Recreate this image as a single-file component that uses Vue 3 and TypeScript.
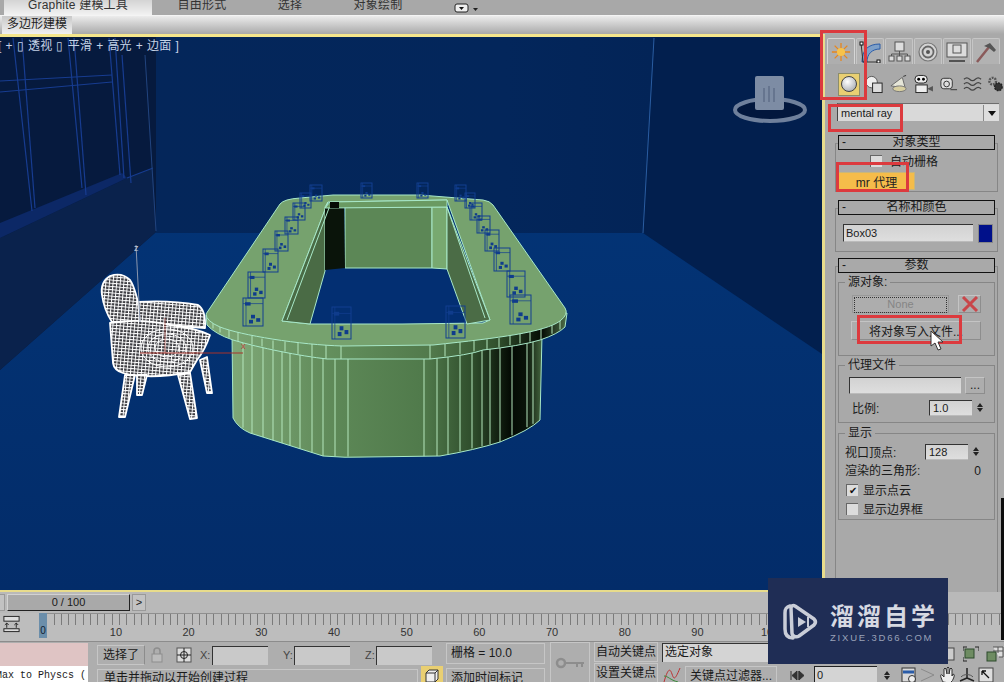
<script setup lang="ts">
type Pt = [number, number];

const rimTop: Pt[] = [[206, 317], [220, 327], [267, 340], [343, 346], [433, 345], [500, 338], [553, 325], [567, 313]];
const rimBottom: Pt[] = [[207, 325], [233, 340], [287, 352], [327, 359], [430, 359], [483, 350], [540, 340], [565, 327]];
const bodyBottom: Pt[] = [[233, 420], [250, 433], [323, 456], [367, 457], [440, 456], [500, 442], [540, 420]];

function yAt(line: Pt[], x: number): number {
  for (let i = 0; i < line.length - 1; i++) {
    const [x0, y0] = line[i];
    const [x1, y1] = line[i + 1];
    if (x >= x0 && x <= x1) return y0 + ((y1 - y0) * (x - x0)) / (x1 - x0);
  }
  return line[line.length - 1][1];
}

const rimRibs = [213, 220, 229, 238, 252, 262, 273, 285, 298, 312, 326, 341, 430, 445, 460, 474, 487, 499, 510, 520, 530, 541, 552, 560]
  .map((x) => ({ x, y1: yAt(rimTop, x), y2: yAt(rimBottom, x) }));
const bodyRibs = [243, 252, 263, 273, 282, 290, 300, 312, 323, 335, 348, 424, 437, 448, 460, 472, 482, 490, 500, 512, 527, 533]
  .map((x) => ({ x, y1: yAt(rimBottom, x), y2: yAt(bodyBottom, x) }));

// 椅子 (x, y, w, h)
const stools = [
  [243, 298, 20, 28], [248, 272, 17, 26], [263, 249, 15, 23], [275, 231, 13, 20], [285, 217, 13, 17],
  [293, 203, 12, 17], [300, 193, 11, 15], [310, 185, 12, 16],
  [510, 295, 21, 29], [507, 271, 18, 26], [494, 248, 16, 23], [485, 230, 14, 21], [477, 216, 13, 17],
  [470, 203, 12, 17], [465, 193, 10, 15], [455, 185, 11, 16],
  [361, 183, 11, 15], [417, 183, 11, 15], [332, 307, 19, 32], [446, 306, 19, 32],
];

const chairParts = [
  'M102 295Q100 282 110 276Q122 272 130 280Q136 288 142 322L112 322Q104 310 102 295z',
  'M138 302Q170 300 198 305Q206 310 205 328L140 323z',
  'M110 323Q140 318 170 325Q195 328 210 335Q205 350 197 360L190 372Q150 380 123 373Q114 370 113 363z',
  'M125 375L135 375L125 417L119 417z',
  'M137 375L147 375L142 395L137 395z',
  'M178 375L190 373L197 418L190 419z',
  'M200 360L207 357L212 393L207 393z',
];

const windowLines = [
  [13, 38, 32, 211], [22, 38, 35, 208], [68, 38, 82, 188], [74, 38, 86, 195],
  [109, 38, 120, 175], [115, 38, 124, 178], [122, 55, 131, 183],
  [0, 81, 112, 75], [0, 92, 112, 82], [127, 178, 153, 168],
];

const rulerLabels = [10, 20, 30, 40, 50, 60, 70, 80, 90, 100];
</script>

<template>
  <div class="app">
    <div class="tabs">
      <span class="tab active">Graphite 建模工具</span>
      <span class="tab w1">自由形式</span>
      <span class="tab w2">选择</span>
      <span class="tab w3">对象绘制</span>
      <svg class="tab-menu" width="26" height="10" viewBox="0 0 26 10">
        <rect x="1" y="1" width="13" height="8" rx="2" fill="#eee" stroke="#222" />
        <path d="M5 4h5l-2.5 3z" fill="#111" />
        <path d="M19 5h5l-2.5 3z" fill="#222" />
      </svg>
    </div>
    <div class="ribbon"><span class="ribbon-tab">多边形建模</span></div>

    <div class="middle">
      <div class="viewport">
        <svg class="scene" width="822" height="553" viewBox="0 37 822 553">
          <defs>
            <linearGradient id="rimShade" x1="206" x2="567" y1="0" y2="0" gradientUnits="userSpaceOnUse">
              <stop offset="0" stop-color="#7fa877" />
              <stop offset="0.4" stop-color="#5f8b59" />
              <stop offset="0.62" stop-color="#527a4c" />
              <stop offset="0.8" stop-color="#33532f" />
              <stop offset="0.93" stop-color="#050c05" />
              <stop offset="1" stop-color="#4f7049" />
            </linearGradient>
            <linearGradient id="bodyShade" x1="232" x2="542" y1="0" y2="0" gradientUnits="userSpaceOnUse">
              <stop offset="0" stop-color="#7fa877" />
              <stop offset="0.35" stop-color="#5c8756" />
              <stop offset="0.62" stop-color="#507a4b" />
              <stop offset="0.78" stop-color="#2e4c2b" />
              <stop offset="0.9" stop-color="#040a04" />
              <stop offset="0.95" stop-color="#0a140a" />
              <stop offset="1" stop-color="#45663f" />
            </linearGradient>
            <linearGradient id="wallShade" x1="0" x2="1" y1="0" y2="0">
              <stop offset="0" stop-color="#04265a" />
              <stop offset="0.7" stop-color="#03265b" />
              <stop offset="1" stop-color="#032457" />
            </linearGradient>
            <linearGradient id="floorShade" x1="0" x2="0" y1="0" y2="1">
              <stop offset="0" stop-color="#03377b" />
              <stop offset="1" stop-color="#032c69" />
            </linearGradient>
            <pattern id="mesh" width="3.6" height="3.2" patternUnits="userSpaceOnUse" patternTransform="rotate(5)">
              <rect width="3.6" height="3.2" fill="#3b3b40" />
              <path d="M0 .5H3.600M.5 0V3.200" stroke="#fff" stroke-width="1" />
            </pattern>
          </defs>

          <!-- 房间 -->
          <rect x="0" y="37" width="822" height="553" fill="url(#floorShade)" />
          <polygon points="156,37 654,37 643,233 156,233" fill="url(#wallShade)" />
          <polygon points="654,37 822,37 822,354 643,233" fill="#021f4e" />
          <polygon points="0,37 156,37 156,232 0,370" fill="#061a3e" />
          <polygon points="0,238 127,178 153,168 156,232 0,370" fill="#0a224c" />
          <polygon points="0,223 122,173 127,178 0,238" fill="#0c2866" />
          <line v-for="(l, i) in windowLines" :key="i" :x1="l[0]" :y1="l[1]" :x2="l[2]" :y2="l[3]" stroke="#173c90" stroke-width="1.2" />
          <line x1="145" y1="55" x2="156" y2="231" stroke="#21447f" />
          <line x1="654" y1="38" x2="643" y2="233" stroke="#2a5ca0" />

          <!-- 桌子 -->
          <path d="M232 335L233 418Q238 428 250 433L323 456Q345 458 367 457L440 456Q475 450 500 442Q530 430 540 420L542 335z" fill="url(#bodyShade)" stroke="#a8e8c8" />
          <line v-for="r in bodyRibs" :key="'b' + r.x" :x1="r.x" :y1="r.y1" :x2="r.x" :y2="r.y2" stroke="#b4e6bc" stroke-width="1" />
          <path d="M206 315L207 325Q215 334 233 340C260 348 300 356 327 359L430 359Q470 355 483 350Q520 346 540 340Q558 334 565 327L567 313z" fill="url(#rimShade)" stroke="#a8e8c8" />
          <line v-for="r in rimRibs" :key="'r' + r.x" :x1="r.x" :y1="r.y1" :x2="r.x" :y2="r.y2" stroke="#b4e6bc" stroke-width="1" />
          <path d="M206 314L280 204Q284 199 300 198L333 195L420 195L483 200Q490 201 493 205L565 308Q569 314 560 321C545 332 500 338 433 345L343 346C300 345 240 335 220 327Q206 321 206 314z" fill="#76a26e" stroke="#a8e8c8" />
          <polygon points="328,202 447,200 490,320 483,323 402,324 310,324 282,321" fill="#032f72" stroke="#a8e8c8" />
          <polygon points="328,202 282,321 310,324 325,271 325,207" fill="#4a6b45" stroke="#a8e8c8" />
          <polygon points="345,207 432,207 432,268 345,268" fill="#5c8756" stroke="#a8e8c8" />
          <polygon points="325,208 344,207 345,268 325,270" fill="#0a140a" />
          <polygon points="432,207 447,207 447,269 432,268" fill="#78a970" stroke="#a8e8c8" />
          <polygon points="447,207 490,320 467,324 447,269" fill="#4b6c46" stroke="#a8e8c8" />
          <polygon points="330,202 447,200 447,207 325,208" fill="#6a9a62" stroke="#a8e8c8" />
          <rect x="330" y="202" width="9" height="6" fill="#050a05" />
          <path d="M287 320L329 208M485 318L447 207" fill="none" stroke="#a8e8c8" />

          <!-- 代理物体 -->
          <g v-for="(s, i) in stools" :key="'s' + i" fill="none" stroke="#123f90">
            <rect :x="s[0]" :y="s[1]" :width="s[2]" :height="s[3]" />
            <path :d="`M${s[0]} ${s[1] + s[3] * 0.2}h${s[2]}M${s[0] + s[2] * 0.15} ${s[1]}v${s[3]}`" stroke-width="0.7" />
            <rect :x="s[0] + s[2] * 0.1" :y="s[1] + s[3] * 0.15" :width="s[2] * 0.28" :height="s[3] * 0.12" fill="#0f3c8c" stroke="none" />
            <rect :x="s[0] + s[2] * 0.4" :y="s[1] + s[3] * 0.6" :width="s[2] * 0.2" :height="s[3] * 0.13" fill="#0f3c8c" stroke="none" />
            <rect :x="s[0] + s[2] * 0.66" :y="s[1] + s[3] * 0.72" :width="s[2] * 0.2" :height="s[3] * 0.13" fill="#0f3c8c" stroke="none" />
            <rect :x="s[0] + s[2] * 0.3" :y="s[1] + s[3] * 0.78" :width="s[2] * 0.2" :height="s[3] * 0.13" fill="#0f3c8c" stroke="none" />
          </g>

          <!-- 椅子 -->
          <path v-for="(p, i) in chairParts" :key="'c' + i" :d="p" fill="url(#mesh)" stroke="#fff" stroke-width="1.8" stroke-linejoin="round" />
          <g fill="none" stroke="#fff" stroke-width="1">
            <ellipse cx="167" cy="348" rx="26" ry="19" />
            <ellipse cx="167" cy="348" rx="19" ry="14" />
            <ellipse cx="167" cy="348" rx="12" ry="9" />
          </g>
          <line x1="136" y1="245" x2="140" y2="322" stroke="#8a96ad" />
          <line x1="140" y1="353" x2="243" y2="353" stroke="#a8332a" />
          <line x1="165" y1="318" x2="165" y2="353" stroke="#a8332a" stroke-opacity="0.6" />
          <text x="241" y="349" class="axis">x</text>
          <text x="134" y="251" class="axis z">z</text>

          <!-- ViewCube -->
          <g class="cube">
            <ellipse cx="770" cy="110" rx="35" ry="11" fill="#02173d" stroke="#6f809c" stroke-width="4" />
            <rect x="755" y="76" width="29" height="34" rx="2" fill="#7d8ca4" />
            <path d="M764 88v14M769 86v16M774 88v14" stroke="#66758f" stroke-width="2" />
          </g>
        </svg>
        <div class="vp-label">[ + ▯ 透视 ▯ 平滑 + 高光 + 边面 ]</div>
      </div>

      <aside class="panel">
        <div class="cmd-tabs">
          <span class="cmd-tab on">
            <svg width="20" height="20" viewBox="0 0 22 22"><g stroke="#e8861c" stroke-width="1.4"><path d="M11 1v20M1 11h20M4 4l14 14M18 4L4 18" /></g><circle cx="11" cy="11" r="4.5" fill="#f7c24a" /></svg>
          </span>
          <span class="cmd-tab">
            <svg width="22" height="22" viewBox="0 0 22 22"><path d="M3 21C3 9 9 3 21 3v5C13 8 8 13 8 21z" fill="#7ea0c8" stroke="#2a5ca8" /><path d="M2 2l2 19h16" fill="none" stroke="#333" /><rect x="1" y="1" width="3" height="3" fill="#fff" stroke="#111" /><rect x="18" y="19" width="3" height="3" fill="#fff" stroke="#111" /></svg>
          </span>
          <span class="cmd-tab">
            <svg width="24" height="22" viewBox="0 0 24 22"><g fill="#ddd" stroke="#555"><rect x="8" y="1" width="9" height="9" /><rect x="2" y="15" width="5" height="5" /><rect x="10" y="15" width="5" height="5" /><rect x="18" y="15" width="5" height="5" /></g><path d="M12.500 10v3M4.500 15v-2h16v2M12.500 13v2" fill="none" stroke="#555" /></svg>
          </span>
          <span class="cmd-tab">
            <svg width="22" height="22" viewBox="0 0 22 22"><circle cx="11" cy="11" r="9" fill="#d4d4d4" stroke="#777" stroke-width="1.200" /><circle cx="11" cy="11" r="5.500" fill="none" stroke="#666" stroke-width="1.800" /><circle cx="11" cy="11" r="2" fill="#555" /></svg>
          </span>
          <span class="cmd-tab">
            <svg width="24" height="22" viewBox="0 0 24 22"><rect x="2" y="2" width="20" height="14" fill="#dcdcdc" stroke="#555" /><rect x="8" y="4" width="8" height="8" fill="none" stroke="#555" /><path d="M4 20h16" stroke="#333" stroke-width="1.500" /></svg>
          </span>
          <span class="cmd-tab">
            <svg width="24" height="22" viewBox="0 0 24 22"><path d="M3 21L15 6" stroke="#8a5a5a" stroke-width="2.500" /><path d="M10 5l6-3 6 7-2 2-5-4z" fill="#555" /></svg>
          </span>
        </div>

        <div class="sub-icons">
          <span class="sub-on"><svg width="18" height="18" viewBox="0 0 18 18"><defs><radialGradient id="ball" cx="0.4" cy="0.35" r="0.7"><stop offset="0" stop-color="#fff" /><stop offset="1" stop-color="#a9adb4" /></radialGradient></defs><circle cx="9" cy="9" r="7.500" fill="url(#ball)" stroke="#444" /></svg></span>
          <svg width="20" height="20" viewBox="0 0 20 20"><circle cx="7" cy="8" r="6" fill="#eee" stroke="#555" /><rect x="8" y="9" width="10" height="10" fill="#ddd" stroke="#222" /></svg>
          <svg width="20" height="20" viewBox="0 0 20 20"><path d="M2 12L14 3l3 11z" fill="#e6e6d8" stroke="#666" /><path d="M15 2l3-1" stroke="#333" /><ellipse cx="11" cy="15" rx="7" ry="3" fill="#d8cfa0" stroke="#777" /></svg>
          <svg width="22" height="20" viewBox="0 0 22 20"><rect x="2" y="1" width="13" height="8" rx="4" fill="#eee" stroke="#222" /><rect x="3" y="11" width="12" height="8" fill="#eee" stroke="#222" /><path d="M15 15l6-3v6z" fill="#555" /><circle cx="6" cy="5" r="1.500" /><circle cx="11" cy="5" r="1.500" /></svg>
          <svg width="20" height="18" viewBox="0 0 20 18"><rect x="2" y="3" width="12" height="11" rx="3" fill="#ddd" stroke="#333" /><circle cx="8" cy="9" r="3" fill="none" stroke="#333" /><path d="M12 15h7" stroke="#333" /></svg>
          <svg width="20" height="18" viewBox="0 0 20 18"><path d="M1 4q3-3 6 0t6 0 6 0M1 9q3-3 6 0t6 0 6 0M1 14q3-3 6 0t6 0 6 0" fill="none" stroke="#444" stroke-width="1.200" /></svg>
          <svg width="18" height="18" viewBox="0 0 18 18"><circle cx="6" cy="6" r="3.500" fill="none" stroke="#555" stroke-width="2.500" stroke-dasharray="2 1" /><circle cx="12" cy="12" r="4" fill="#333" stroke="#222" stroke-width="1.500" stroke-dasharray="2 1" /></svg>
        </div>

        <div class="combo"><span>mental ray</span><i class="combo-btn"></i></div>

        <section class="rollout r1">
          <header class="r-head"><b>-</b>对象类型</header>
          <div class="r-body type-body">
            <label class="auto-grid"><i class="check"></i>自动栅格</label>
            <button class="mr-btn">mr 代理</button>
          </div>
        </section>

        <section class="rollout r2">
          <header class="r-head"><b>-</b>名称和颜色</header>
          <div class="r-body name-body">
            <span class="field name-field">Box03</span>
            <i class="swatch"></i>
          </div>
        </section>

        <section class="rollout r3">
          <header class="r-head"><b>-</b>参数</header>
          <div class="r-body params">
            <fieldset class="group g-source">
              <legend>源对象:</legend>
              <div class="src-row">
                <button class="flat none-btn"><span>None</span></button>
                <button class="flat x-btn">
                  <svg width="18" height="16" viewBox="0 0 18 16"><path d="M2 1l14 14M16 1L2 15" stroke="#c9464a" stroke-width="3" /></svg>
                </button>
              </div>
              <button class="flat write-btn">将对象写入文件...</button>
            </fieldset>
            <fieldset class="group g-file">
              <legend>代理文件</legend>
              <div class="file-row">
                <span class="field file-field"></span>
                <button class="flat dots">...</button>
              </div>
              <div class="spin-row scale-row">
                <span>比例:</span>
                <span class="field spin-field">1.0</span>
                <span class="spin"><i></i><i class="down"></i></span>
              </div>
            </fieldset>
            <fieldset class="group g-show">
              <legend>显示</legend>
              <div class="spin-row">
                <span class="grow">视口顶点:</span>
                <span class="field spin-field">128</span>
                <span class="spin"><i></i><i class="down"></i></span>
              </div>
              <div class="tri-row"><span>渲染的三角形:</span><span>0</span></div>
              <label class="check-row"><i class="check on">✔</i>显示点云</label>
              <label class="check-row"><i class="check"></i>显示边界框</label>
            </fieldset>
          </div>
        </section>
      </aside>
    </div>

    <div class="time-row">
      <span class="t-arrow cut">&lt;</span>
      <span class="t-slider">0 / 100</span>
      <span class="t-arrow">&gt;</span>
    </div>

    <div class="track-row">
      <svg class="track-icon" width="20" height="18" viewBox="0 0 20 18">
        <rect x="2" y="1" width="16" height="5" fill="#ddd" stroke="#222" />
        <path d="M5 8v5M15 8v5M3 10l2-2 2 2M13 10l2-2 2 2M2 15h16" fill="none" stroke="#222" />
        <rect x="2" y="14" width="16" height="3" fill="#ddd" stroke="#222" />
      </svg>
      <div class="ruler">
        <span class="thumb">0</span>
        <div class="ticks"></div>
        <div class="labels"><span v-for="n in rulerLabels" :key="n">{{ n }}</span></div>
      </div>
    </div>

    <div class="status">
      <div class="script-box">
        <div class="pink"></div>
        <div class="listener">Max to Physcs (</div>
      </div>
      <div class="info">
        <div class="info-top">
          <span class="lbl-box">选择了</span>
          <svg class="lock" width="14" height="16" viewBox="0 0 14 16"><rect x="2" y="7" width="10" height="8" fill="#bbb" stroke="#8d8d8d" /><path d="M4 7V4a3 3 0 0 1 6 0v3" fill="none" stroke="#8d8d8d" stroke-width="1.500" /></svg>
          <svg class="abs-ico" width="16" height="16" viewBox="0 0 16 16"><rect x="1" y="1" width="14" height="14" fill="#ddd" stroke="#555" /><circle cx="8" cy="8" r="3.500" fill="none" stroke="#222" /><path d="M8 1v14M1 8h14" stroke="#222" /></svg>
          <span class="axis-lbl first">X:</span><span class="coord"></span>
          <span class="axis-lbl">Y:</span><span class="coord"></span>
          <span class="axis-lbl">Z:</span><span class="coord"></span>
        </div>
        <div class="info-bottom">单击并拖动以开始创建过程</div>
      </div>
      <div class="mini-btn">
        <svg width="16" height="16" viewBox="0 0 16 16"><path d="M2 5l3-3h9v9l-3 3H2zM2 5h9v9M11 5l3-3" fill="#eee" stroke="#333" /></svg>
      </div>
      <div class="grid-col">
        <span class="grid-box">栅格 = 10.0</span>
        <span class="grid-box">添加时间标记</span>
      </div>
      <div class="key-btn">
        <svg width="30" height="12" viewBox="0 0 30 12"><circle cx="6" cy="6" r="4" fill="none" stroke="#8d8d8d" stroke-width="2.500" /><path d="M10 6h19M22 6v4M27 6v4" stroke="#8d8d8d" stroke-width="2" /></svg>
      </div>
      <div class="key-col">
        <span class="key-lbl">自动关键点</span>
        <span class="key-lbl">设置关键点</span>
      </div>
      <div class="filter-col">
        <span class="sel-field">选定对象</span>
        <div class="filter-row">
          <svg width="20" height="17" viewBox="0 0 20 17"><path d="M2 16C6 2 8 2 10 8s3 6 8-6" fill="none" stroke="#b33" /><path d="M2 10c4 0 6 4 14 6" fill="none" stroke="#3a8a3a" /></svg>
          <span class="filter-btn">关键点过滤器...</span>
        </div>
      </div>
      <div class="nav">
        <div class="nav-top">
          <svg width="13" height="16" viewBox="0 0 13 16"><rect x="2" y="2" width="10" height="12" fill="#ddd" stroke="#444" /><path d="M5 5v5h5" fill="none" stroke="#222" /></svg>
          <svg width="16" height="16" viewBox="0 0 16 16"><rect x="2" y="2" width="12" height="12" fill="#ccc" stroke="#444" /></svg>
          <svg width="16" height="16" viewBox="0 0 16 16"><rect x="2" y="3" width="9" height="9" fill="#6e8c62" stroke="#2c4a2c" /><path d="M0 5V1h4M12 1h4v4M0 11v4h4" fill="none" stroke="#222" /></svg>
          <svg width="18" height="16" viewBox="0 0 18 16"><path d="M7 1h10v10H13M12 1v6M7 5h10" fill="#ddd" stroke="#555" /><rect x="1" y="6" width="9" height="9" fill="#6e8c62" stroke="#2c4a2c" /></svg>
        </div>
        <div class="nav-bottom">
          <svg width="18" height="13" viewBox="0 0 18 13"><path d="M2 2v9M8 2L3 6.500 8 11zM10 2v9M10 2l5 4.500L10 11z" fill="#333" stroke="#333" /></svg>
          <span class="frame">0</span>
          <span class="spin small"><i></i><i class="down"></i></span>
          <svg width="18" height="16" viewBox="0 0 18 16"><rect x="2" y="1" width="13" height="14" fill="#d8d8d8" stroke="#333" /><path d="M3 5h11" stroke="#2a5ca8" stroke-width="3" /><circle cx="12" cy="12" r="3.500" fill="#eee" stroke="#333" /></svg>
          <svg width="16" height="16" viewBox="0 0 16 16"><path d="M1 2l13 6-13 6" fill="none" stroke="#8a8a8a" /></svg>
          <svg width="18" height="18" viewBox="0 0 18 18"><path d="M5 16C2 10 2 8 4 9l2 2V3q1-2 2 0l1 5V2q1-2 2 0v6l1-5q1-2 2 0v7l1-2q2 0 1 3-1 4-4 6z" fill="#eee" stroke="#333" /></svg>
          <svg width="18" height="18" viewBox="0 0 18 18"><path d="M9 2v10M9 12l7 3M9 12l-7 3" stroke="#222" stroke-width="1.500" /><path d="M3 11a7 5 0 0 1 12 0" fill="none" stroke="#555" /></svg>
          <svg width="16" height="16" viewBox="0 0 16 16"><rect x="1" y="1" width="14" height="14" fill="#ddd" stroke="#444" /><path d="M4 4l7 7M4 4h4M4 4v4" stroke="#111" stroke-width="1.300" fill="none" /></svg>
        </div>
      </div>
    </div>

    <!-- 教程标注 -->
    <i class="mark m1"></i>
    <i class="mark m2"></i>
    <i class="mark m3"></i>
    <i class="mark m4"></i>
    <i class="edge"></i>

    <svg class="cursor" width="14" height="22" viewBox="0 0 14 22">
      <path d="M1 1v15l4-3 3 7 3-1-3-7h5z" fill="#fff" stroke="#333" />
    </svg>

    <div class="watermark">
      <svg width="36" height="40" viewBox="0 0 36 40">
        <path d="M8 4c-4 1-5 3-5 7v16c0 6 3 9 8 9" fill="none" stroke="#c9cdd8" stroke-width="3.500" stroke-linecap="round" />
        <path d="M9 6c0-2 2-3 4-2l19 13c2 2 2 4 0 6L17 34c-3 2-7 0-7-3z" fill="none" stroke="#c9cdd8" stroke-width="3.500" stroke-linejoin="round" />
        <path d="M16 15l8 5-8 5z" fill="#c9cdd8" />
        <path d="M26 15v10" stroke="#c9cdd8" stroke-width="2" />
      </svg>
      <div class="wm-text">
        <div class="wm-title">溜溜自学</div>
        <div class="wm-url">ZIXUE.3D66.COM</div>
      </div>
    </div>
  </div>
</template>

<style>
html,
body {
  margin: 0;
  overflow: hidden;
  background: #b4b4b4;
}
</style>

<style scoped>
.app {
  position: relative;
  width: 1004px;
  height: 682px;
  overflow: hidden;
  display: flex;
  flex-direction: column;
  background: #b4b4b4;
  font-family: "Liberation Sans", "Noto Sans CJK SC", sans-serif;
  font-size: 12px;
  color: #1a1a1a;
}

/* 顶部标签 */
.tabs {
  height: 15px;
  flex: none;
  display: flex;
  align-items: flex-end;
  background: #a8a8a8;
  overflow: hidden;
  font-size: 12px;
  color: #333;
}
.tab {
  display: block;
  height: 15px;
  line-height: 10px;
  text-align: center;
  letter-spacing: 0.2px;
}
.tab.active {
  width: 148px;
  margin-left: 4px;
  background: linear-gradient(#d4d4d4, #f2f2f2);
}
.w1 { width: 100px; }
.w2 { width: 76px; }
.w3 { width: 100px; }
.tab-menu { margin: 0 0 2px 26px; }

.ribbon {
  height: 19px;
  flex: none;
  box-sizing: border-box;
  border-top: 1px solid #f4f4f4;
  background: linear-gradient(#ececec, #a9a9a9);
}
.ribbon-tab {
  display: block;
  width: 70px;
  height: 18px;
  margin-left: 2px;
  background: linear-gradient(#c9c9c9, #f0f0f0);
  text-align: center;
  line-height: 16px;
  font-size: 12px;
  color: #222;
}

.middle {
  flex: none;
  height: 558px;
  display: flex;
}

/* 视口 */
.viewport {
  position: relative;
  width: 825px;
  box-sizing: border-box;
  flex: none;
  border-top: 3px solid #f5e68c;
  border-right: 3px solid #e8dc8c;
  border-bottom: 2px solid #e8dc8c;
  overflow: hidden;
  background: #03306f;
}
.scene { display: block; }
.cube { filter: blur(0.6px); }
.vp-label {
  position: absolute;
  left: -2px;
  top: 1px;
  white-space: pre;
  word-spacing: 0.5px;
  color: #c4d2e6;
  font-size: 12px;
  line-height: 16px;
  letter-spacing: 0.2px;
}
.axis {
  fill: #b5403a;
  font: 9px "Liberation Sans", sans-serif;
}
.axis.z { fill: #c8d0dc; }

/* 命令面板 */
.panel {
  width: 179px;
  flex: none;
  box-sizing: border-box;
  background: #a9a9a9;
  overflow: hidden;
}
.cmd-tabs {
  display: flex;
  height: 26px;
  margin: 4px 0 0 2px;
  gap: 1px;
}
.cmd-tab {
  width: 28px;
  box-sizing: border-box;
  display: flex;
  align-items: center;
  justify-content: center;
  background: #b2b2b2;
  border: 1px solid #c6c6c6;
  border-bottom: none;
  border-radius: 2px 2px 0 0;
}
.cmd-tab.on {
  background: #aeaeae;
  border-color: #d6d6d6;
}
.sub-icons {
  height: 24px;
  margin: 8px 0 0 13px;
  display: flex;
  align-items: center;
  gap: 5px;
}
.sub-on {
  width: 23px;
  height: 23px;
  display: flex;
  align-items: center;
  justify-content: center;
  background: #e9cf72;
  border: 1px solid #8d8d6a;
  box-sizing: border-box;
}
.combo {
  display: flex;
  align-items: center;
  justify-content: space-between;
  box-sizing: border-box;
  height: 18px;
  margin: 7px 5px 0 12px;
  padding-left: 3px;
  background: #d9d9d9;
  border-left: 1px solid #444;
  border-top: 1px solid #6e6e6e;
  font-size: 11px;
}
.combo-btn {
  width: 15px;
  height: 16px;
  background: #dedede;
  border-left: 1px solid #888;
  position: relative;
}
.combo-btn::after {
  content: "";
  position: absolute;
  left: 4px;
  top: 6px;
  border: 4px solid transparent;
  border-top: 5px solid #111;
}
.rollout { margin: 0 6px 0 10px; }
.r1 { margin-top: 14px; }
.r2 { margin-top: 8px; }
.r3 { margin-top: 6px; }
.r-head {
  position: relative;
  z-index: 1;
  display: flex;
  justify-content: center;
  height: 15px;
  margin: 0 3px;
  box-sizing: border-box;
  border: 1px solid #111;
  background: #a9a9a9;
  line-height: 13px;
  font-size: 12px;
}
.r-head b {
  position: absolute;
  left: 3px;
  top: 0;
  font-weight: normal;
}
.r-body {
  margin-top: -7px;
  border: 1px solid #868686;
  border-top-color: #8d8d8d;
  box-sizing: border-box;
}
.type-body {
  height: 49px;
  padding-top: 10px;
}
.auto-grid {
  display: flex;
  align-items: center;
  height: 13px;
  margin-left: 34px;
  gap: 8px;
}
.check {
  display: block;
  width: 12px;
  height: 12px;
  flex: none;
  box-sizing: border-box;
  background: #dcdcdc;
  border-top: 1px solid #666;
  border-left: 1px solid #666;
  font-style: normal;
  font-size: 10px;
  line-height: 11px;
  text-align: center;
  color: #111;
}
.mr-btn {
  display: block;
  width: 77px;
  height: 18px;
  margin: 5px 0 0 2px;
  padding: 0;
  border: 1px solid #c9b67a;
  background: #f5bc4a;
  font: 12px "Liberation Sans", "Noto Sans CJK SC", sans-serif;
  color: #222;
}
.name-body {
  height: 44px;
  padding: 15px 3px 0 0;
  display: flex;
  gap: 5px;
}
.field {
  display: block;
  box-sizing: border-box;
  background: linear-gradient(#d2d2d2, #dedede);
  border-top: 1px solid #333;
  border-left: 1px solid #333;
  border-bottom: 1px solid #bbb;
  font-size: 11px;
  padding-left: 2px;
}
.name-field {
  width: 130px;
  height: 18px;
  line-height: 16px;
  flex: none;
  margin-left: 7px;
}
.swatch {
  display: block;
  width: 15px;
  height: 19px;
  flex: none;
  background: #00108a;
  border: 1px solid #888;
  box-sizing: border-box;
}
.params {
  height: 330px;
  padding: 8px 2px 0;
  border-bottom: none;
}
.group {
  margin: 0;
  padding: 0;
  border: 1px solid #868686;
  box-sizing: border-box;
  min-width: 0;
}
.group legend {
  margin-left: 6px;
  padding: 0 3px;
  font-size: 12px;
  line-height: 14px;
}
.g-source {
  height: 81px;
  margin-top: 0;
}
.src-row {
  display: flex;
  margin: 6px 0 0 13px;
  gap: 9px;
}
.flat {
  display: block;
  padding: 0;
  background: #adadad;
  border: 1px solid #8d8d8d;
  border-top-color: #c4c4c4;
  border-left-color: #c4c4c4;
  font: 12px "Liberation Sans", "Noto Sans CJK SC", sans-serif;
  color: #1a1a1a;
}
.none-btn {
  width: 97px;
  height: 18px;
  border-color: #999;
}
.none-btn span {
  display: block;
  margin: 1px;
  height: 14px;
  line-height: 13px;
  border: 1px dotted #333;
  color: #858585;
  font-size: 11px;
}
.x-btn {
  width: 23px;
  height: 18px;
}
.write-btn {
  width: 130px;
  height: 19px;
  margin: 8px 0 0 12px;
}
.g-file {
  height: 65px;
  margin-top: 2px;
}
.file-row {
  display: flex;
  gap: 4px;
  margin: 5px 0 0 10px;
}
.file-field {
  width: 112px;
  height: 17px;
}
.dots {
  width: 20px;
  height: 17px;
  line-height: 15px;
}
.spin-row {
  display: flex;
  align-items: center;
  margin: 5px 0 0 13px;
}
.scale-row span:first-child { width: 77px; }
.grow { width: 84px; margin-left: -7px; margin-right: -4px; }
.g-show .spin-row { margin-top: 3px; }
.spin-field {
  width: 43px;
  height: 16px;
  line-height: 14px;
  padding-left: 3px;
  font-size: 11px;
}
.spin {
  display: flex;
  flex-direction: column;
  width: 11px;
  margin-left: 2px;
  gap: 1px;
  flex: none;
}
.spin i {
  display: block;
  height: 7px;
  box-sizing: border-box;
  background: #c2c2c2;
  border: 3px solid transparent;
  border-bottom: 4px solid #222;
  border-top: none;
  background-clip: padding-box;
  width: 0;
  margin: 0 auto;
}
.spin i.down {
  border-bottom: none;
  border-top: 4px solid #222;
}
.g-show {
  height: 94px;
  margin-top: 3px;
}
.tri-row {
  display: flex;
  justify-content: space-between;
  margin: 3px 13px 0 6px;
  height: 17px;
  line-height: 17px;
}
.check-row {
  display: flex;
  align-items: center;
  gap: 5px;
  height: 19px;
  margin-left: 7px;
}

/* 时间滑块 */
.time-row {
  height: 21px;
  flex: none;
  display: flex;
  align-items: center;
  gap: 2px;
  background: #b9b9b9;
  font-size: 11px;
}
.t-arrow {
  display: block;
  width: 14px;
  height: 17px;
  box-sizing: border-box;
  border: 1px solid #999;
  background: #c2c2c2;
  text-align: center;
  line-height: 15px;
}
.t-arrow.cut {
  width: 5px;
  overflow: hidden;
  border-left: none;
  color: transparent;
}
.t-slider {
  display: block;
  width: 123px;
  height: 17px;
  box-sizing: border-box;
  border: 1px solid #d2d2d2;
  border-right-color: #222;
  border-bottom-color: #222;
  background: #a9a9a9;
  text-align: center;
  line-height: 15px;
}

/* 轨迹栏 */
.track-row {
  height: 28px;
  flex: none;
  display: flex;
  background: #bdbdbd;
}
.track-icon {
  width: 39px;
  flex: none;
  margin-top: 2px;
  padding-right: 18px;
  padding-left: 2px;
  box-sizing: border-box;
}
.ruler {
  position: relative;
  flex: 1;
  font-size: 11px;
}
.thumb {
  position: absolute;
  left: 0;
  top: 0;
  width: 8px;
  height: 25px;
  box-sizing: border-box;
  padding-top: 12px;
  background: #6b8eaa;
  text-align: center;
  color: #123;
  line-height: 12px;
  font-size: 10px;
}
.ticks {
  height: 11px;
  border-top: 1px solid #8f8f8f;
  background: repeating-linear-gradient(to right, #7b7b7b 0 1px, transparent 1px 7.27px);
}
.labels {
  display: flex;
  padding-left: 40.6px;
  line-height: 14px;
}
.labels span {
  width: 72.7px;
  flex: none;
  text-align: center;
  color: #333;
}

/* 状态栏 */
.status {
  flex: 1;
  display: flex;
  background: #aeaeae;
  min-height: 0;
  border-top: 1px solid #8c8c8c;
}
.script-box {
  width: 88px;
  flex: none;
  margin-top: 1px;
}
.pink {
  height: 23px;
  background: #dfc4c4;
}
.listener {
  height: 18px;
  background: #fff;
  font: 10px/20px "Liberation Mono", monospace;
  white-space: nowrap;
  overflow: hidden;
  text-indent: -4px;
}
.info {
  width: 321px;
  flex: none;
  margin-left: 9px;
}
.info-top {
  display: flex;
  align-items: center;
  height: 22px;
  margin-top: 2px;
}
.lbl-box {
  display: block;
  width: 48px;
  height: 20px;
  flex: none;
  box-sizing: border-box;
  border: 1px solid #c6c6c6;
  border-right-color: #8c8c8c;
  text-align: center;
  line-height: 18px;
  font-size: 12px;
}
.lock { margin-left: 5px; flex: none; }
.abs-ico { margin-left: 12px; flex: none; }
.axis-lbl {
  width: 11px;
  flex: none;
  margin-left: 15px;
  font-size: 11px;
  color: #444;
}
.axis-lbl.first {
  width: 12px;
  margin-left: 8px;
}
.coord {
  display: block;
  width: 56px;
  height: 19px;
  flex: none;
  box-sizing: border-box;
  background: #c9c9c9;
  border-top: 1px solid #333;
  border-left: 1px solid #333;
}
.info-bottom {
  height: 24px;
  box-sizing: border-box;
  margin-top: 3px;
  width: 321px;
  border: 1px solid #c6c6c6;
  padding-left: 6px;
  font-size: 12px;
  line-height: 16px;
}
.mini-btn {
  width: 22px;
  height: 20px;
  flex: none;
  margin: 24px 0 0 3px;
  box-sizing: border-box;
  background: #e9cf72;
  display: flex;
  justify-content: center;
  padding-top: 2px;
}
.grid-col {
  width: 99px;
  flex: none;
  margin: 1px 0 0 3px;
}
.grid-box {
  display: block;
  height: 21px;
  margin-bottom: 4px;
  box-sizing: border-box;
  border: 1px solid #c6c6c6;
  padding-left: 4px;
  line-height: 19px;
  font-size: 12px;
}
.key-btn {
  width: 40px;
  height: 41px;
  flex: none;
  margin-left: 5px;
  box-sizing: border-box;
  border: 1px solid #c6c6c6;
  display: flex;
  align-items: center;
  justify-content: center;
}
.key-col {
  width: 64px;
  flex: none;
  margin-left: 4px;
}
.key-lbl {
  display: block;
  height: 20px;
  margin-bottom: 1px;
  box-sizing: border-box;
  border: 1px solid #c6c6c6;
  font-size: 12px;
  line-height: 18px;
  text-align: center;
  white-space: nowrap;
}
.filter-col {
  width: 122px;
  flex: none;
  margin: 1px 0 0 4px;
}
.sel-field {
  display: block;
  width: 107px;
  height: 19px;
  box-sizing: border-box;
  background: #d4d4d4;
  border-top: 1px solid #333;
  border-left: 1px solid #333;
  padding-left: 2px;
  line-height: 17px;
}
.filter-row {
  display: flex;
  align-items: flex-start;
  gap: 3px;
  margin-top: 4px;
}
.filter-btn {
  display: block;
  width: 92px;
  height: 20px;
  box-sizing: border-box;
  border: 1px solid #c6c6c6;
  padding-left: 4px;
  white-space: nowrap;
  font-size: 12px;
  line-height: 18px;
}
.nav {
  flex: 1;
  min-width: 0;
  margin-left: 5px;
}
.nav-top {
  display: flex;
  justify-content: flex-end;
  align-items: center;
  gap: 7px;
  height: 22px;
  margin: 1px 0 0;
}
.nav-bottom {
  display: flex;
  align-items: center;
  gap: 2px;
  height: 20px;
}
.frame {
  display: block;
  width: 63px;
  height: 18px;
  margin-left: 5px;
  box-sizing: border-box;
  background: #d4d4d4;
  border-top: 1px solid #222;
  border-left: 1px solid #222;
  padding-left: 2px;
  font-size: 11px;
  line-height: 16px;
}
.spin.small { margin-right: 6px; }

/* 覆盖层 */
.mark {
  position: absolute;
  display: block;
  box-sizing: border-box;
  border: 3px solid #dc3a3e;
}
.m1 { left: 820px; top: 30px; width: 47px; height: 70px; }
.m2 { left: 828px; top: 104px; width: 75px; height: 28px; }
.m3 { left: 836px; top: 162px; width: 73px; height: 30px; }
.m4 { left: 857px; top: 315px; width: 105px; height: 29px; }
.edge {
  position: absolute;
  display: block;
  left: 1001px;
  top: 498px;
  width: 3px;
  height: 142px;
  background: #0c0c0c;
}
.cursor {
  position: absolute;
  left: 930px;
  top: 330px;
}
.watermark {
  position: absolute;
  left: 768px;
  top: 578px;
  width: 180px;
  height: 86px;
  box-sizing: border-box;
  padding: 24px 0 0 14px;
  display: flex;
  gap: 12px;
  background: #1f2d55;
  color: #d6d9e2;
}
.wm-title {
  font-size: 24px;
  font-weight: 700;
  line-height: 30px;
  letter-spacing: 3px;
  white-space: nowrap;
}
.wm-url {
  font-size: 9.5px;
  line-height: 11px;
  letter-spacing: 1.8px;
  color: #9aa2b8;
  white-space: nowrap;
}
</style>
